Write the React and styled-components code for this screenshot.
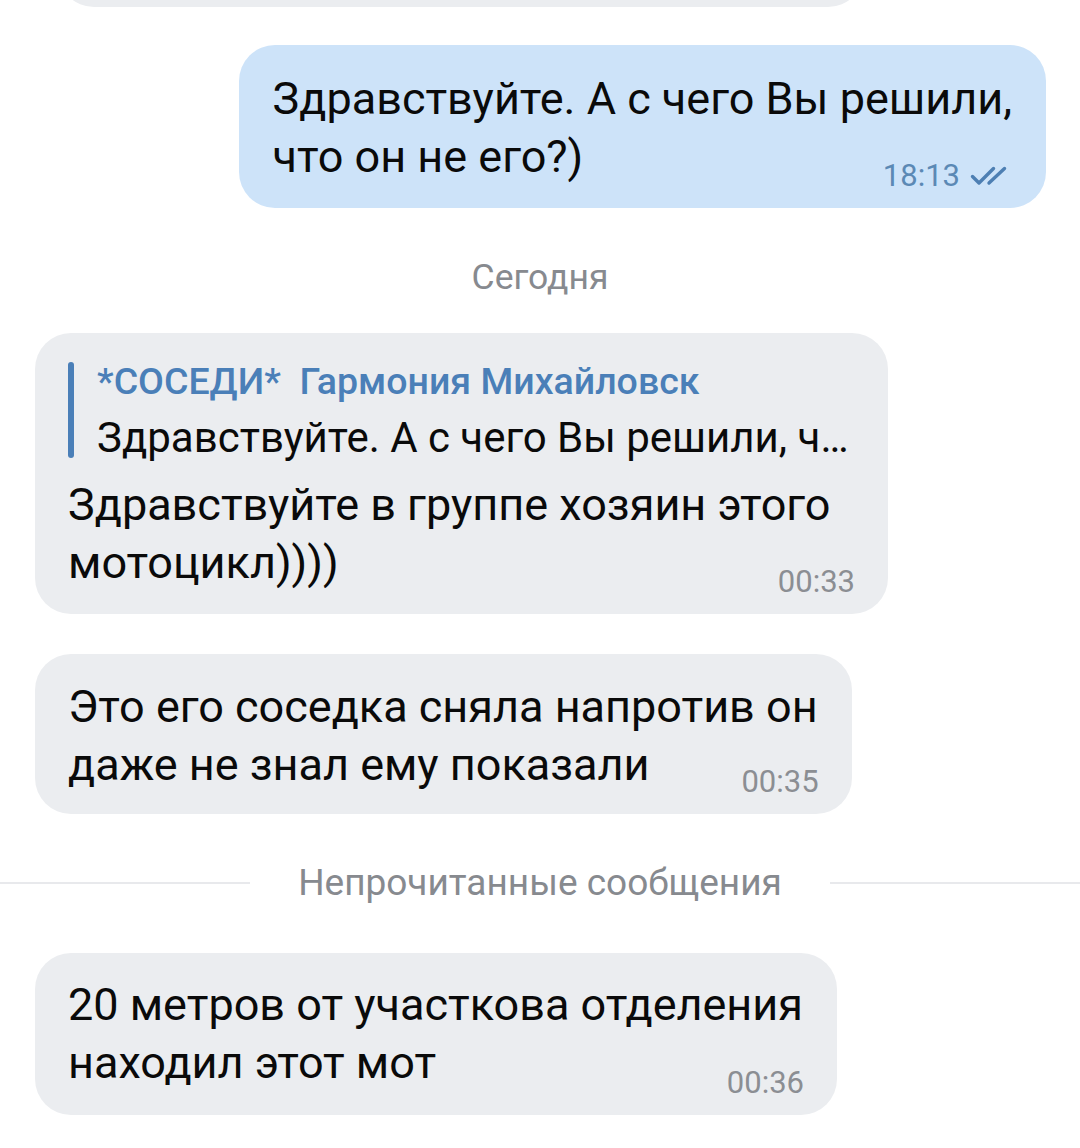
import React from "react";
import styled, { createGlobalStyle } from "styled-components";

const Global = createGlobalStyle`
  html, body { margin: 0; padding: 0; background: #ffffff; }
  body { font-family: Roboto, "Noto Sans", "Liberation Sans", sans-serif; -webkit-font-smoothing: antialiased; }
`;

const Page = styled.div`
  width: 1080px;
  height: 1148px;
  overflow: hidden;
  background: #ffffff;
  display: flex;
  flex-direction: column;
`;

const TopStub = styled.div`
  margin: -33px 0 0 58px;
  width: 806px;
  height: 40px;
  flex: none;
  background: #ebedf0;
  border-radius: 0 0 36px 36px;
`;

const Row = styled.div`
  display: flex;
  justify-content: ${(p) => (p.$out ? "flex-end" : "flex-start")};
  padding: ${(p) => (p.$out ? "0 34px 0 0" : "0 0 0 35px")};
  margin-top: ${(p) => p.$mt || 0}px;
  flex: none;
`;

const Bubble = styled.div`
  position: relative;
  box-sizing: border-box;
  width: ${(p) => (p.$w ? `${p.$w}px` : "fit-content")};
  padding: ${(p) => p.$pad || "24px 34px 22px 33px"};
  border-radius: 36px;
  background: ${(p) => (p.$out ? "#cde3f9" : "#ebedf0")};
  color: #0a0a0a;
  font-size: 45px;
  line-height: 58px;
`;

const Line = styled.div`
  white-space: nowrap;
`;

const Time = styled.div`
  position: absolute;
  right: ${(p) => (p.$out ? 36 : 33)}px;
  bottom: 16px;
  display: flex;
  align-items: center;
  gap: 10px;
  font-size: 31px;
  line-height: 32px;
  color: ${(p) => (p.$out ? "#5b89b5" : "#8b8e93")};
`;

const Reply = styled.div`
  display: flex;
  gap: 23px;
  margin-bottom: 18px;
`;

const ReplyBar = styled.div`
  width: 6px;
  border-radius: 3px;
  background: #4a7fb8;
`;

const ReplyBody = styled.div`
  display: flex;
  flex-direction: column;
`;

const ReplyName = styled.div`
  font-size: 37.5px;
  line-height: 38px;
  font-weight: 500;
  color: #4a7fb8;
  white-space: pre;
`;

const ReplyText = styled.div`
  margin-top: 17px;
  font-size: 42px;
  line-height: 41px;
  color: #0a0a0a;
  white-space: nowrap;
`;

const DateLabel = styled.div`
  text-align: center;
  font-size: 35.5px;
  line-height: 40px;
  color: #878a8f;
  margin: 49px 0 36px;
  flex: none;
`;

const Divider = styled.div`
  display: flex;
  align-items: center;
  gap: 48px;
  margin: 49px 0 50px;
  height: 40px;
  flex: none;
`;

const DividerLine = styled.div`
  flex: 1;
  height: 2px;
  background: #e8e9ec;
`;

const DividerText = styled.div`
  font-size: 37px;
  line-height: 40px;
  color: #878a8f;
  white-space: nowrap;
`;

const Checks = () => (
  <svg width="40" height="20" viewBox="0 0 40 20" fill="none">
    <path d="M2.5 10.5 L9 17 L23.5 2.5" stroke="#4d7fb3" strokeWidth="3.4" strokeLinecap="round" strokeLinejoin="round" />
    <path d="M19 17 L34.5 2.5" stroke="#4d7fb3" strokeWidth="3.4" strokeLinecap="round" />
  </svg>
);

export default function App() {
  return (
    <Page>
      <Global />
      <TopStub />
      <Row $out $mt={38}>
        <Bubble $out $pad="25px 34px 22px 34px">
          <Line>Здравствуйте. А с чего Вы решили,</Line>
          <Line>что он не его?)</Line>
          <Time $out>
            <span>18:13</span>
            <Checks />
          </Time>
        </Bubble>
      </Row>
      <DateLabel>Сегодня</DateLabel>
      <Row>
        <Bubble $w={853} $pad="29px 34px 22px 33px">
          <Reply>
            <ReplyBar />
            <ReplyBody>
              <ReplyName>*СОСЕДИ*  Гармония Михайловск</ReplyName>
              <ReplyText>Здравствуйте. А с чего Вы решили, ч…</ReplyText>
            </ReplyBody>
          </Reply>
          <Line>Здравствуйте в группе хозяин этого</Line>
          <Line>мотоцикл))))</Line>
          <Time>00:33</Time>
        </Bubble>
      </Row>
      <Row $mt={40}>
        <Bubble $pad="24px 34px 20px 33px">
          <Line>Это его соседка сняла напротив он</Line>
          <Line>даже не знал ему показали</Line>
          <Time>00:35</Time>
        </Bubble>
      </Row>
      <Divider>
        <DividerLine />
        <DividerText>Непрочитанные сообщения</DividerText>
        <DividerLine />
      </Divider>
      <Row>
        <Bubble $pad="23px 34px 23px 33px">
          <Line>20 метров от участкова отделения</Line>
          <Line>находил этот мот</Line>
          <Time>00:36</Time>
        </Bubble>
      </Row>
    </Page>
  );
}
